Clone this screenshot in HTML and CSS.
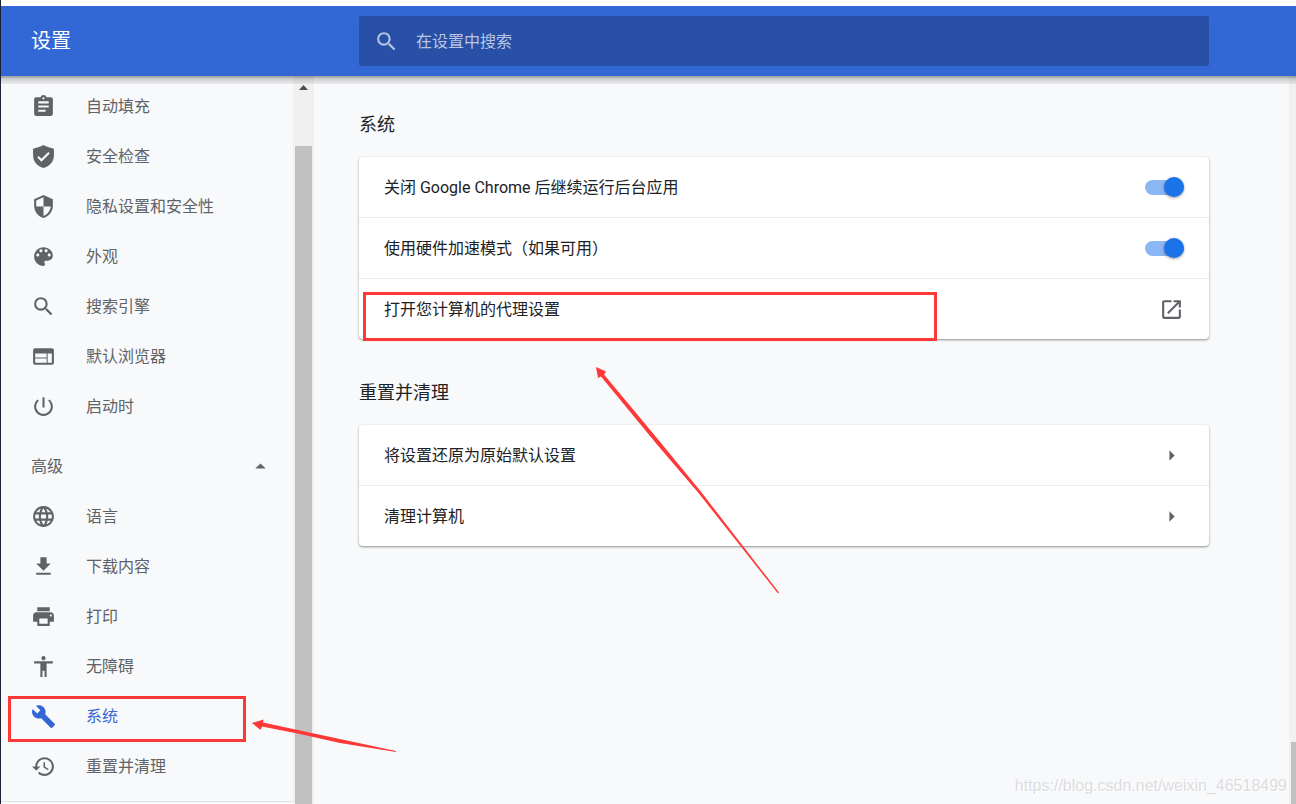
FILE: index.html
```html
<!DOCTYPE html>
<html lang="zh-CN">
<head>
<meta charset="utf-8">
<title>设置</title>
<link rel="stylesheet" href="styles.css">
</head>
<body>
<div class="app">
  <header class="toolbar">
    <h1 class="toolbar-title">设置</h1>
    <label class="search">
      <svg class="icon" viewBox="0 0 24 24" aria-hidden="true"><path d="M15.5 14h-.79l-.28-.27A6.471 6.471 0 0 0 16 9.5 6.5 6.5 0 1 0 9.5 16c1.61 0 3.09-.59 4.23-1.57l.27.28v.79l5 4.99L20.49 19l-4.99-5zm-6 0C7.01 14 5 11.99 5 9.5S7.01 5 9.5 5 14 7.01 14 9.5 11.99 14 9.5 14z"/></svg>
      <input class="search-input" type="text" placeholder="在设置中搜索" aria-label="在设置中搜索">
    </label>
  </header>

  <div class="body">
    <nav class="sidebar">
      <div class="menu">
        <a class="item" href="#autofill"><svg class="icon" viewBox="0 0 24 24" aria-hidden="true"><path d="M19 3h-4.18C14.4 1.84 13.3 1 12 1c-1.3 0-2.4.84-2.82 2H5c-1.1 0-2 .9-2 2v14c0 1.100.9 2 2 2h14c1.100 0 2-.9 2-2V5c0-1.100-.9-2-2-2zm-7 0c.55 0 1 .45 1 1s-.45 1-1 1-1-.45-1-1 .45-1 1-1zm2 14H7v-2h7v2zm3-4H7v-2h10v2zm0-4H7V7h10v2z"/></svg>自动填充</a>
        <a class="item" href="#safety"><svg class="icon" viewBox="0 0 24 24" aria-hidden="true"><path d="M12 1C9 2.700 5 4 2 4.500V11c0 6 4.300 10.700 10 12 5.700-1.300 10-6 10-12V4.500C19 4 15 2.700 12 1zm-2 16l-4-4 1.410-1.410L10 14.170l6.590-6.590L18 9l-8 8z"/></svg>安全检查</a>
        <a class="item" href="#privacy"><svg class="icon" viewBox="0 0 24 24" aria-hidden="true"><path d="M12 1L3 5v6c0 5.550 3.840 10.740 9 12 5.160-1.260 9-6.450 9-12V5l-9-4zm0 10.990h7c-.53 4.120-3.280 7.790-7 8.940V12H5V6.300l7-3.110v8.800z"/></svg>隐私设置和安全性</a>
        <a class="item" href="#appearance"><svg class="icon" viewBox="0 0 24 24" aria-hidden="true"><path d="M12 3c-4.970 0-9 4.030-9 9s4.030 9 9 9c.83 0 1.500-.67 1.500-1.500 0-.39-.15-.74-.39-1.010-.23-.26-.38-.61-.38-.99 0-.83.67-1.500 1.500-1.500H16c2.760 0 5-2.240 5-5 0-4.420-4.030-8-9-8zm-5.500 9c-.83 0-1.500-.67-1.500-1.500S5.670 9 6.500 9 8 9.670 8 10.500 7.330 12 6.500 12zm3-4C8.670 8 8 7.330 8 6.500S8.670 5 9.500 5s1.500.67 1.500 1.500S10.330 8 9.500 8zm5 0c-.83 0-1.500-.67-1.500-1.500S13.670 5 14.500 5s1.500.67 1.500 1.500S15.330 8 14.500 8zm3 4c-.83 0-1.500-.67-1.500-1.500S16.670 9 17.500 9s1.500.67 1.500 1.500-.67 1.500-1.500 1.500z"/></svg>外观</a>
        <a class="item" href="#search"><svg class="icon" viewBox="0 0 24 24" aria-hidden="true"><path d="M15.500 14h-.79l-.28-.27A6.471 6.471 0 0 0 16 9.500 6.500 6.500 0 1 0 9.500 16c1.610 0 3.090-.59 4.230-1.570l.27.28v.79l5 4.990L20.490 19l-4.990-5zm-6 0C7.010 14 5 11.990 5 9.500S7.010 5 9.500 5 14 7.010 14 9.500 11.990 14 9.500 14z"/></svg>搜索引擎</a>
        <a class="item" href="#browser"><svg class="icon" viewBox="0 0 24 24" aria-hidden="true"><path d="M20 4H4c-1.100 0-1.990.9-1.990 2L2 18c0 1.100.9 2 2 2h16c1.100 0 2-.9 2-2V6c0-1.100-.9-2-2-2zm-5 14H4v-4h11v4zm0-5H4V9h11v4zm5 5h-4V9h4v9z"/></svg>默认浏览器</a>
        <a class="item" href="#startup"><svg class="icon" viewBox="0 0 24 24" aria-hidden="true"><path d="M13 3h-2v10h2V3zm4.830 2.170l-1.420 1.420C17.990 7.860 19 9.810 19 12c0 3.870-3.130 7-7 7s-7-3.130-7-7c0-2.190 1.010-4.140 2.580-5.420L6.170 5.170C4.230 6.820 3 9.260 3 12c0 4.970 4.030 9 9 9s9-4.030 9-9c0-2.740-1.230-5.180-3.170-6.830z"/></svg>启动时</a>

        <button class="advanced" type="button" aria-expanded="true">高级<svg class="icon" viewBox="0 0 24 24" aria-hidden="true"><path d="M7 14l5-5 5 5z"/></svg></button>

        <a class="item" href="#languages"><svg class="icon" viewBox="0 0 24 24" aria-hidden="true"><path d="M11.990 2C6.470 2 2 6.480 2 12s4.470 10 9.990 10C17.520 22 22 17.520 22 12S17.520 2 11.990 2zm6.930 6h-2.950c-.32-1.250-.78-2.450-1.380-3.560 1.840.63 3.370 1.910 4.330 3.560zM12 4.040c.83 1.200 1.480 2.530 1.910 3.960h-3.820c.43-1.430 1.080-2.760 1.910-3.960zM4.260 14C4.100 13.360 4 12.690 4 12s.1-1.360.26-2h3.380c-.08.66-.14 1.320-.14 2s.06 1.340.14 2H4.260zm.82 2h2.950c.32 1.250.78 2.450 1.380 3.560-1.840-.63-3.370-1.900-4.330-3.560zm2.950-8H5.080c.96-1.660 2.490-2.930 4.330-3.560C8.810 5.550 8.350 6.750 8.030 8zM12 19.960c-.83-1.200-1.480-2.530-1.910-3.960h3.820c-.43 1.430-1.080 2.760-1.910 3.960zM14.340 14H9.660c-.09-.66-.16-1.320-.16-2s.07-1.350.16-2h4.680c.09.65.16 1.320.16 2s-.07 1.340-.16 2zm.25 5.560c.6-1.110 1.060-2.310 1.380-3.560h2.950c-.96 1.650-2.490 2.930-4.330 3.560zM16.360 14c.08-.66.14-1.320.14-2s-.06-1.340-.14-2h3.380c.16.64.26 1.310.26 2s-.1 1.360-.26 2h-3.380z"/></svg>语言</a>
        <a class="item" href="#downloads"><svg class="icon" viewBox="0 0 24 24" aria-hidden="true"><path d="M19 9h-4V3H9v6H5l7 7 7-7zM5 18v2h14v-2H5z"/></svg>下载内容</a>
        <a class="item" href="#printing"><svg class="icon" viewBox="0 0 24 24" aria-hidden="true"><path d="M19 8H5c-1.660 0-3 1.340-3 3v6h4v4h12v-4h4v-6c0-1.660-1.340-3-3-3zm-3 11H8v-5h8v5zm3-7c-.55 0-1-.45-1-1s.45-1 1-1 1 .45 1 1-.45 1-1 1zm-1-9H6v4h12V3z"/></svg>打印</a>
        <a class="item" href="#accessibility"><svg class="icon" viewBox="0 0 24 24" aria-hidden="true"><path d="M12 2c1.100 0 2 .9 2 2s-.9 2-2 2-2-.9-2-2 .9-2 2-2zm9 7h-6v13h-2v-6h-2v6H9V9H3V7h18v2z"/></svg>无障碍</a>
        <a class="item item-selected" href="#system" aria-current="page"><svg class="icon" viewBox="0 0 24 24" aria-hidden="true"><path d="M22.700 19l-9.100-9.100c.9-2.300.4-5-1.500-6.900-2-2-5-2.400-7.400-1.300L9 6 6 9 1.600 4.700C.4 7.100.9 10.100 2.900 12.100c1.900 1.900 4.600 2.400 6.900 1.500l9.100 9.100c.4.4 1 .4 1.400 0l2.300-2.300c.5-.4.5-1.100.1-1.400z"/></svg>系统</a>
        <a class="item" href="#reset"><svg class="icon" viewBox="0 0 24 24" aria-hidden="true"><path d="M13 3c-4.970 0-9 4.030-9 9H1l3.890 3.890.07.14L9 12H6c0-3.870 3.130-7 7-7s7 3.130 7 7-3.130 7-7 7c-1.930 0-3.680-.79-4.940-2.060l-1.420 1.420C8.270 19.990 10.510 21 13 21c4.970 0 9-4.030 9-9s-4.030-9-9-9zm-1 5v5l4.280 2.540.72-1.210-3.500-2.080V8H12z"/></svg>重置并清理</a>
        <hr class="divider">
      </div>
      <div class="scroll-track" aria-hidden="true">
        <svg class="scroll-arrow" viewBox="0 0 9 5"><path d="M0 5L4.500 0 9 5z"/></svg>
        <div class="scroll-thumb"></div>
      </div>
    </nav>

    <main class="content">
      <section>
        <h2 class="section-title">系统</h2>
        <div class="card">
          <label class="row">关闭 Google Chrome 后继续运行后台应用<input class="toggle" type="checkbox" role="switch" checked></label>
          <label class="row">使用硬件加速模式（如果可用）<input class="toggle" type="checkbox" role="switch" checked></label>
          <button class="row" type="button">打开您计算机的代理设置<svg class="icon" viewBox="0 0 24 24" aria-hidden="true"><path d="M19 19H5V5h7V3H5c-1.110 0-2 .9-2 2v14c0 1.100.89 2 2 2h14c1.100 0 2-.9 2-2v-7h-2v7zM14 3v2h3.590l-9.830 9.830 1.410 1.410L19 6.410V10h2V3h-7z"/></svg></button>
        </div>
      </section>
      <section>
        <h2 class="section-title">重置并清理</h2>
        <div class="card">
          <button class="row" type="button">将设置还原为原始默认设置<svg class="icon" viewBox="0 0 24 24" aria-hidden="true"><path d="M10 17l5-5-5-5z"/></svg></button>
          <button class="row" type="button">清理计算机<svg class="icon" viewBox="0 0 24 24" aria-hidden="true"><path d="M10 17l5-5-5-5z"/></svg></button>
        </div>
      </section>
      <p class="watermark">https://blog.csdn.net/weixin_46518499</p>
    </main>

    <div class="page-track" aria-hidden="true"><div class="page-thumb"></div></div>
  </div>

  <svg class="markup" aria-hidden="true">
    <rect class="markup-box" x="9.500" y="697.500" width="235" height="43"/>
    <rect class="markup-box" x="364.500" y="293.500" width="571" height="46"/>
    <path d="M252 723L263.500 719.500 263 722.500 300 730.500 396 751 396 752 340 743 300 734 262 726.500 260.500 730z"/>
    <path d="M596 367L606 371.500 604 374.500 661 443 700 490.500 779 592.500 778 593.500 698.500 493 657 444.500 601 376.500 598 378z"/>
  </svg>
</div>
</body>
</html>
```
FILE: styles.css
```css
* {
  box-sizing: border-box;
}

body {
  margin: 0;
  background: #f8f9fb;
  color: #202124;
  font: 16px/25px Roboto, "Noto Sans CJK SC", sans-serif;
}

.app {
  position: relative;
  display: flex;
  flex-direction: column;
  height: 100vh;
  overflow: hidden;
  border-left: 1px solid #1b2233;
}

.icon {
  flex: none;
  width: 25px;
  height: 25px;
  fill: currentColor;
}

/* Top bar */
.toolbar {
  position: relative;
  z-index: 1;
  display: flex;
  align-items: center;
  flex: none;
  padding: 10px 87px 10px 30px;
  border-top: 6px solid #fff;
  background: #3367d6;
}

.toolbar::after {
  content: "";
  position: absolute;
  top: 100%;
  left: 0;
  right: 0;
  height: 8px;
  background: linear-gradient(rgba(0, 0, 0, 0.38), rgba(0, 0, 0, 0.16) 40%, rgba(0, 0, 0, 0.05));
}

.toolbar-title {
  flex: none;
  width: 328px;
  margin: 0;
  color: #fff;
  font-size: 20px;
  font-weight: 400;
}

.search {
  display: flex;
  flex: 1;
  align-items: center;
  gap: 17px;
  height: 50px;
  padding: 0 15px;
  border-radius: 2px;
  background: #2850a7;
  color: #b7c5e3;
}

.search-input {
  flex: 1;
  min-width: 0;
  padding: 0;
  border: 0;
  outline: 0;
  background: none;
  color: #fff;
  font: inherit;
}

.search-input::placeholder {
  color: #b7c5e3;
  opacity: 1;
}

.body {
  display: flex;
  flex: 1;
  min-height: 0;
}

/* Side menu */
.sidebar {
  display: flex;
  flex: none;
  width: 313px;
  overflow: hidden;
}

.menu {
  flex: 1;
  padding-top: 5px;
  color: #5f6368;
}

.item {
  display: flex;
  align-items: center;
  gap: 30px;
  height: 50px;
  padding-left: 30px;
  color: inherit;
  text-decoration: none;
}

.item-selected {
  color: #3367d6;
}

.advanced {
  display: flex;
  align-items: center;
  justify-content: space-between;
  width: 100%;
  height: 50px;
  margin: 10px 0 0;
  padding: 0 20px 0 30px;
  border: 0;
  background: none;
  color: inherit;
  font: inherit;
}

.divider {
  margin: 10px 0 0;
  border: 0;
  border-top: 1px solid #e1e2e4;
}

.scroll-track {
  display: flex;
  flex-direction: column;
  align-items: center;
  flex: none;
  width: 21px;
  padding: 9px 2px 0;
  background: #f0f0f0;
}

.scroll-arrow {
  flex: none;
  width: 9px;
  height: 5px;
  fill: #4d4d4d;
}

.scroll-thumb {
  flex: 1;
  width: 17px;
  margin-top: 56px;
  background: #c1c1c1;
}

/* Settings */
.content {
  display: flex;
  flex: 1;
  flex-direction: column;
  min-width: 0;
  padding: 36px 80px 0 45px;
}

.section-title {
  margin: 0 0 20px;
  font-size: 18px;
  font-weight: 400;
}

.card {
  margin-bottom: 41px;
  border-radius: 4px;
  background: #fff;
  box-shadow: 0 1px 2px rgba(60, 64, 67, 0.4), 0 1px 3px rgba(60, 64, 67, 0.2);
}

.row {
  display: flex;
  align-items: center;
  justify-content: space-between;
  width: 100%;
  height: 60px;
  padding: 0 25px;
  border: 0;
  background: none;
  color: inherit;
  font: inherit;
  text-align: left;
}

.row + .row {
  height: 61px;
  border-top: 1px solid #ebecee;
}

.toggle {
  appearance: none;
  display: flex;
  align-items: center;
  flex: none;
  width: 39px;
  height: 15px;
  margin: 0;
  border-radius: 8px;
  background: #8cb7f5;
}

.toggle::before {
  content: "";
  width: 20px;
  height: 20px;
  margin-left: auto;
  border-radius: 50%;
  background: #1a73e8;
  box-shadow: 0 1px 3px rgba(0, 0, 0, 0.4);
}

.row .icon {
  color: #5f6368;
}

.watermark {
  margin: auto -78px 6px auto;
  color: #dcdddf;
  font-family: "Liberation Sans", sans-serif;
  text-shadow: 1px 1px #fff;
}

.page-track {
  flex: none;
  width: 7px;
  padding: 666px 0 0 2px;
  background: #f0f0f0;
}

.page-thumb {
  height: 100%;
  background: #c1c1c1;
}

/* Red annotations over the page */
.markup {
  position: absolute;
  top: 0;
  left: -1px;
  z-index: 2;
  width: 100%;
  height: 100%;
  fill: #fe3837;
  pointer-events: none;
}

.markup-box {
  fill: none;
  stroke: #fe3837;
  stroke-width: 3px;
}
```
